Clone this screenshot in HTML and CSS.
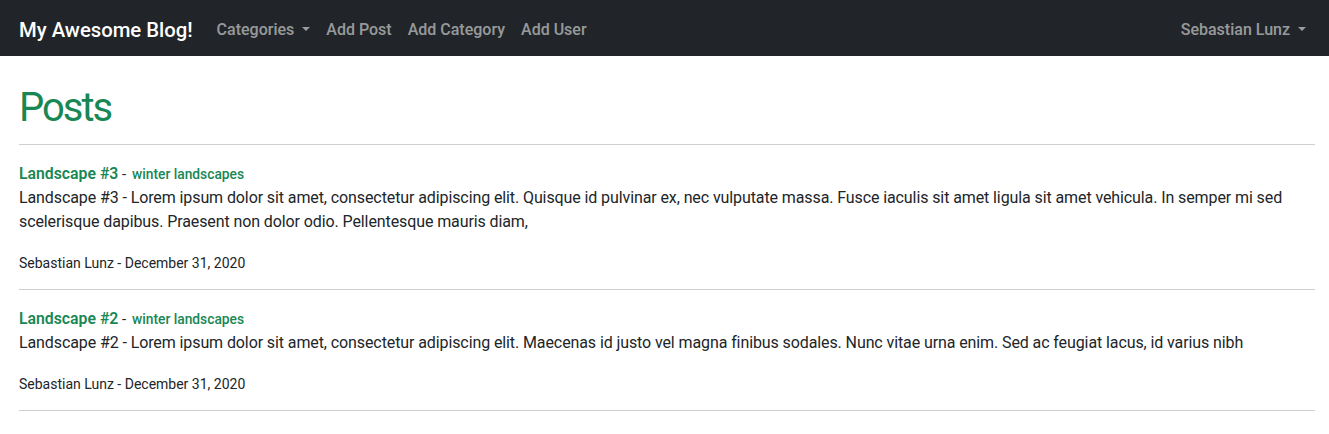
FILE: index.html
```html
<!DOCTYPE html>
<html lang="en">
<head>
<meta charset="utf-8">
<title>My Awesome Blog!</title>
<link rel="stylesheet" href="styles.css">
</head>
<body>
<nav class="navbar">
  <a class="brand" href="#">My Awesome Blog!</a>
  <ul class="nav">
    <li><a class="nav-link dropdown" href="#">Categories</a></li>
    <li><a class="nav-link" href="#">Add Post</a></li>
    <li><a class="nav-link" href="#">Add Category</a></li>
    <li><a class="nav-link" href="#">Add User</a></li>
  </ul>
  <ul class="nav nav-right">
    <li><a class="nav-link dropdown" href="#">Sebastian Lunz</a></li>
  </ul>
</nav>
<main class="main">
  <h1 class="page-title">Posts</h1>
  <section class="posts">
    <article class="post">
      <div class="post-head"><a class="post-title" href="#">Landscape #3</a> - <a class="post-cat" href="#">winter landscapes</a></div>
      <p class="post-body">Landscape #3 - Lorem ipsum dolor sit amet, consectetur adipiscing elit. Quisque id pulvinar ex, nec vulputate massa. Fusce iaculis sit amet ligula sit amet vehicula. In semper mi sed scelerisque dapibus. Praesent non dolor odio. Pellentesque mauris diam,</p>
      <div class="post-meta">Sebastian Lunz - December 31, 2020</div>
    </article>
    <article class="post">
      <div class="post-head"><a class="post-title" href="#">Landscape #2</a> - <a class="post-cat" href="#">winter landscapes</a></div>
      <p class="post-body">Landscape #2 - Lorem ipsum dolor sit amet, consectetur adipiscing elit. Maecenas id justo vel magna finibus sodales. Nunc vitae urna enim. Sed ac feugiat lacus, id varius nibh</p>
      <div class="post-meta">Sebastian Lunz - December 31, 2020</div>
    </article>
  </section>
</main>
</body>
</html>
```

FILE: styles.css
```css
* { box-sizing: border-box; }
html, body { margin: 0; padding: 0; }
body {
  font-family: Roboto, "Liberation Sans", sans-serif;
  font-size: 16px;
  line-height: 24px;
  color: #212529;
  background: #fff;
}
a { text-decoration: none; }

.navbar {
  display: flex;
  align-items: center;
  height: 56px;
  background: #212529;
  padding: 4px 15px 0 19px;
}
.brand {
  color: #fff;
  font-size: 20.3px;
  font-weight: 500;
  margin-right: 16px;
  line-height: 30px;
}
.nav {
  display: flex;
  list-style: none;
  margin: 0;
  padding: 0;
}
.nav-right { margin-left: auto; }
.nav-link {
  display: flex;
  align-items: center;
  padding: 8px;
  color: rgba(255,255,255,.55);
  font-weight: 500;
  font-size: 16px;
}
.dropdown::after {
  content: "";
  display: inline-block;
  margin-left: 8px;
  border-top: 4px solid rgba(255,255,255,.55);
  border-left: 4px solid transparent;
  border-right: 4px solid transparent;
  margin-top: -3px;
}

.main {
  padding: 0 14px 0 19px;
}
.page-title {
  margin: 28px 0 12px;
  font-size: 40px;
  line-height: 48px;
  font-weight: 400;
  letter-spacing: -2px;
  color: #198754;
}
.posts { border-top: 1px solid #cfcfcf; }
.post {
  padding: 17px 0 16px;
  border-bottom: 1px solid #cfcfcf;
}
.post-head {
  height: 24px;
  line-height: 24px;
  font-size: 15px;
}
.post-title {
  color: #198754;
  font-weight: 600;
  font-size: 15.8px;
  line-height: 16px;
}
.post-cat {
  color: #198754;
  font-weight: 500;
  font-size: 13.8px;
  line-height: 16px;
  margin-left: 2px;
}
.post-body {
  margin: 0 0 19px;
  letter-spacing: -0.1px;
}
.post-meta {
  font-size: 14px;
  line-height: 20px;
}
```
